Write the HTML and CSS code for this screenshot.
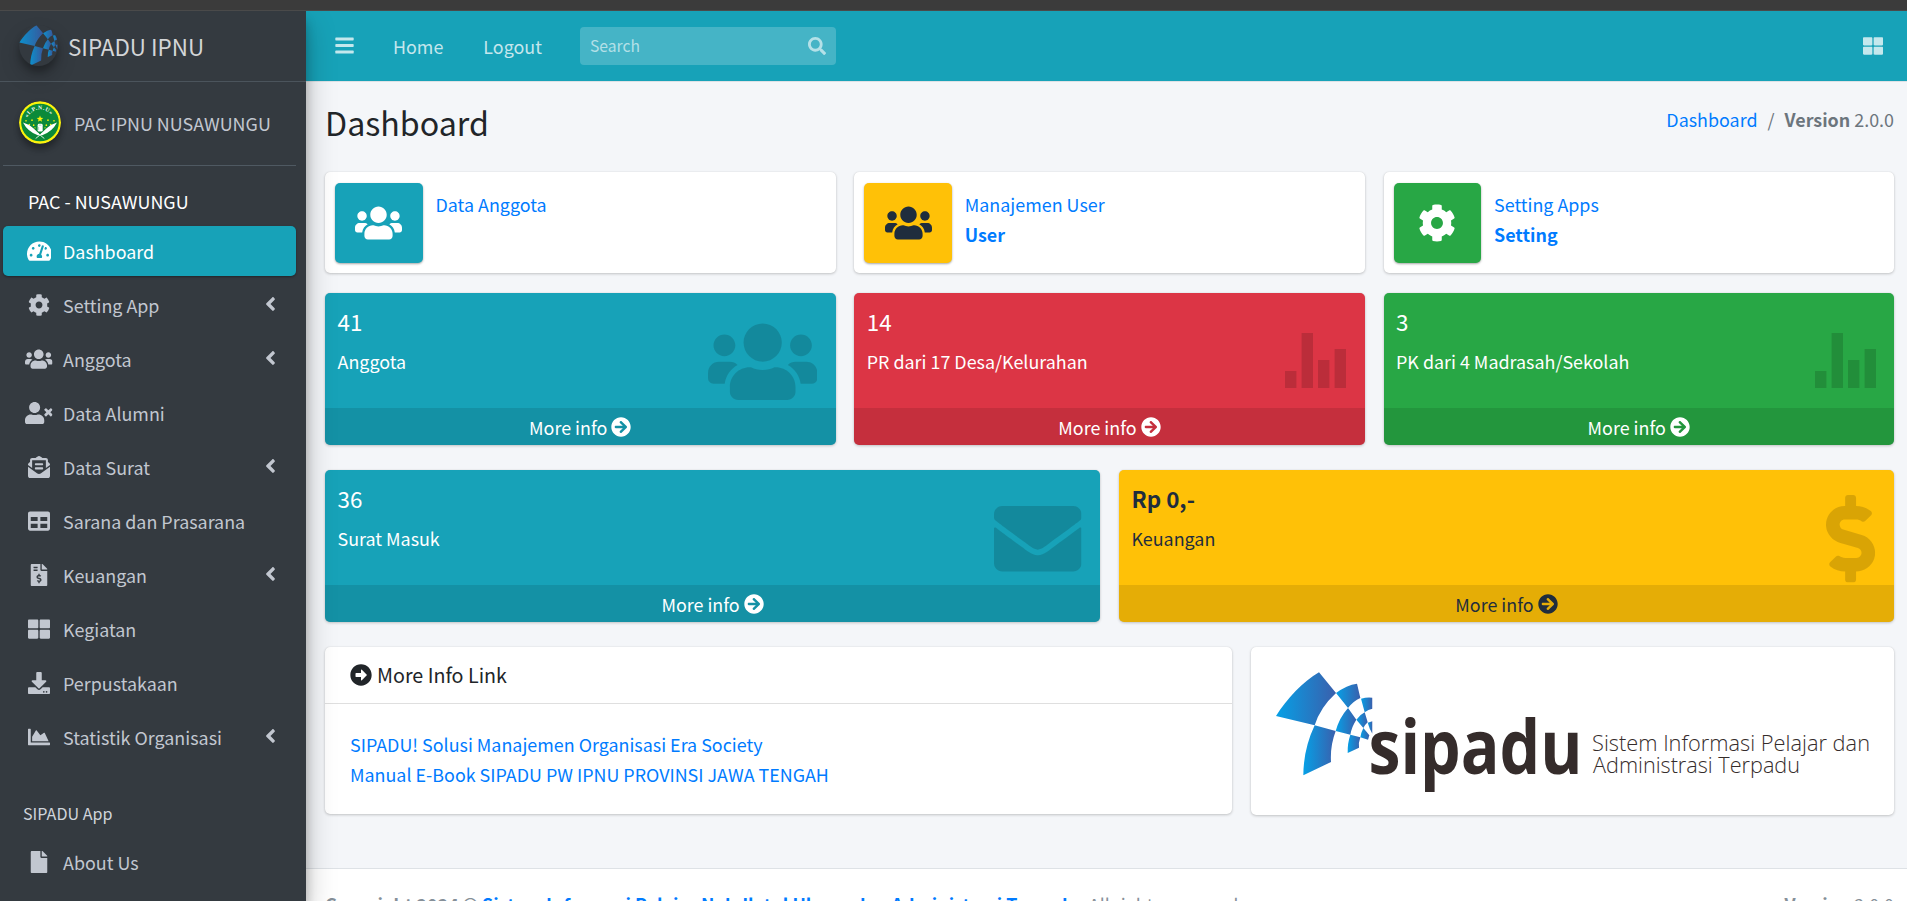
FILE: index.html
```html
<!DOCTYPE html>
<html lang="id">
<head>
<meta charset="utf-8">
<title>SIPADU IPNU | Dashboard</title>
<link rel="stylesheet" href="styles.css">
</head>
<body>
<svg class="sprite" aria-hidden="true">
  <defs>
    <linearGradient id="blue"><stop offset="0" stop-color="#06a0e6"/><stop offset="1" stop-color="#3a5fac"/></linearGradient>
  </defs>
  <symbol id="mark" viewBox="108 98 290 311">
    <g fill="url(#blue)">
      <path d="M108 230C140 180 190 125 237 99L288 161Q240 205 224 258Z"/>
      <path d="M224 258L287 275Q270 320 273 368L190 408Q190 330 224 258Z"/>
      <path d="M288 161Q320 137 351 133L361 176Q340 185 324 206Z"/>
      <path d="M324 206L349 241Q335 262 331 286L287 275Q298 235 324 206Z"/>
      <path d="M331 286L361 294Q355 310 357 325L323 341Q322 312 331 286Z"/>
      <path d="M363 178Q380 173 397 175V208Q385 210 374 219Z"/>
      <path d="M374 219L383 249Q375 256 370 266L349 241Q360 226 374 219Z"/>
      <path d="M383 250L397 246V283Q388 268 383 250Z"/>
      <path d="M370 266L388 288L384 301L361 294Q363 280 370 266Z"/>
    </g>
  </symbol>
  <symbol id="users" viewBox="0 0 640 512"><path d="M96 224c35.3 0 64-28.7 64-64s-28.7-64-64-64-64 28.7-64 64 28.7 64 64 64zm448 0c35.3 0 64-28.7 64-64s-28.7-64-64-64-64 28.7-64 64 28.7 64 64 64zm32 32h-64c-17.6 0-33.5 7.1-45.1 18.6 40.3 22.1 68.9 62 75.1 109.4h66c17.7 0 32-14.3 32-32v-32c0-35.3-28.7-64-64-64zm-256 0c61.9 0 112-50.1 112-112S381.9 32 320 32 208 82.1 208 144s50.1 112 112 112zm76.8 32h-8.3c-20.8 10-43.9 16-68.5 16s-47.6-6-68.5-16h-8.3C179.6 288 128 339.6 128 403.2V432c0 26.5 21.5 48 48 48h288c26.5 0 48-21.5 48-48v-28.8c0-63.6-51.6-115.2-115.2-115.2zm-223.7-13.4C161.5 263.1 145.6 256 128 256H64c-35.3 0-64 28.7-64 64v32c0 17.7 14.3 32 32 32h65.9c6.3-47.4 34.9-87.3 75.2-109.4z"/></symbol>
  <symbol id="cog" viewBox="0 0 512 512"><path d="M487.4 315.7l-42.6-24.6c4.3-23.2 4.3-47 0-70.2l42.6-24.6c4.9-2.8 7.1-8.6 5.5-14-11.1-35.6-30-67.8-54.7-94.6-3.8-4.1-10-5.1-14.8-2.3L380.8 110c-17.9-15.4-38.5-27.3-60.8-35.1V25.8c0-5.6-3.9-10.5-9.4-11.7-36.7-8.2-74.3-7.8-109.2 0-5.5 1.2-9.4 6.1-9.4 11.7V75c-22.2 7.9-42.8 19.8-60.8 35.1L88.7 85.5c-4.9-2.8-11-1.9-14.8 2.3-24.7 26.7-43.6 58.9-54.7 94.6-1.7 5.4.6 11.2 5.5 14L67.3 221c-4.3 23.2-4.3 47 0 70.2l-42.6 24.6c-4.9 2.8-7.1 8.6-5.5 14 11.1 35.6 30 67.8 54.7 94.6 3.8 4.1 10 5.1 14.8 2.3l42.6-24.6c17.9 15.4 38.5 27.3 60.8 35.1v49.2c0 5.6 3.9 10.5 9.4 11.7 36.7 8.2 74.3 7.8 109.2 0 5.5-1.2 9.4-6.1 9.4-11.7v-49.2c22.2-7.9 42.8-19.8 60.8-35.1l42.6 24.6c4.9 2.8 11 1.9 14.8-2.3 24.7-26.7 43.6-58.9 54.7-94.6 1.5-5.5-.7-11.3-5.6-14.1zM256 336c-44.1 0-80-35.9-80-80s35.9-80 80-80 80 35.9 80 80-35.9 80-80 80z"/></symbol>
  <symbol id="gauge" viewBox="0 0 576 512"><path d="M288 32C128.94 32 0 160.94 0 320c0 52.8 14.25 102.26 39.06 144.8 5.61 9.62 16.3 15.2 27.44 15.2h443c11.14 0 21.83-5.58 27.44-15.2C561.75 422.26 576 372.8 576 320c0-159.06-128.94-288-288-288zm0 64c14.71 0 26.58 10.13 30.32 23.65-1.11 2.26-2.64 4.23-3.45 6.67l-9.22 27.67c-5.13 3.49-10.97 6.01-17.64 6.01-17.67 0-32-14.33-32-32S270.33 96 288 96zM96 384c-17.67 0-32-14.33-32-32s14.33-32 32-32 32 14.33 32 32-14.33 32-32 32zm48-160c-17.67 0-32-14.33-32-32s14.33-32 32-32 32 14.33 32 32-14.33 32-32 32zm246.77-72.41l-61.33 184C343.13 347.33 352 364.54 352 384c0 11.72-3.38 22.55-8.88 32H232.88c-5.5-9.45-8.88-20.28-8.88-32 0-33.94 26.5-61.43 59.9-63.59l61.34-184.01c4.17-12.56 17.73-19.45 30.36-15.17 12.57 4.19 19.35 17.79 15.17 30.36zm14.66 57.2l15.52-46.55c3.47-1.29 7.13-2.23 11.05-2.23 17.67 0 32 14.33 32 32s-14.33 32-32 32c-11.38-.01-20.89-6.28-26.57-15.22zM480 384c-17.67 0-32-14.33-32-32s14.33-32 32-32 32 14.33 32 32-14.33 32-32 32z"/></symbol>
  <symbol id="user-times" viewBox="0 0 640 512"><path d="M224 256c70.7 0 128-57.3 128-128S294.7 0 224 0 96 57.3 96 128s57.3 128 128 128zm89.6 32h-16.7c-22.2 10.2-46.9 16-72.9 16s-50.6-5.8-72.9-16h-16.7C60.2 288 0 348.2 0 422.4V464c0 26.5 21.5 48 48 48h352c26.5 0 48-21.5 48-48v-41.6c0-74.2-60.2-134.4-134.4-134.4z"/><path d="M589.6 240l45.6-45.6c6.3-6.3 6.3-16.5 0-22.8l-22.8-22.8c-6.3-6.3-16.5-6.3-22.8 0L544 194.4l-45.6-45.6c-6.3-6.3-16.5-6.3-22.8 0l-22.8 22.8c-6.3 6.3-6.3 16.5 0 22.8l45.6 45.6-45.6 45.6c-6.3 6.3-6.3 16.5 0 22.8l22.8 22.8c6.3 6.3 16.5 6.3 22.8 0l45.6-45.6 45.6 45.6c6.3 6.3 16.5 6.3 22.8 0l22.8-22.8c6.3-6.3 6.3-16.5 0-22.8L589.6 240z"/></symbol>
  <symbol id="mail-open" viewBox="0 0 512 512"><path d="M176 216h160c8.84 0 16-7.16 16-16v-16c0-8.84-7.16-16-16-16H176c-8.84 0-16 7.16-16 16v16c0 8.84 7.16 16 16 16zm-16 80c0 8.84 7.16 16 16 16h160c8.84 0 16-7.16 16-16v-16c0-8.84-7.16-16-16-16H176c-8.84 0-16 7.16-16 16v16zm96 121.13c-16.42 0-32.84-5.06-46.86-15.19L0 250.86V464c0 26.51 21.49 48 48 48h416c26.51 0 48-21.49 48-48V250.86L302.86 401.94c-14.02 10.12-30.44 15.19-46.86 15.19zm237.61-254.18c-8.85-6.94-17.24-13.47-29.61-22.81V96c0-26.51-21.49-48-48-48h-77.55c-3.04-2.2-5.87-4.26-9.04-6.56C312.6 29.17 279.2-.35 256 0c-23.2-.35-56.59 29.17-73.41 41.44-3.17 2.3-6 4.36-9.04 6.56H96c-26.51 0-48 21.49-48 48v44.14c-12.37 9.33-20.76 15.87-29.61 22.81A47.995 47.995 0 0 0 0 200.72v10.65l96 69.35V96h320v184.72l96-69.35v-10.65c0-14.74-6.78-28.67-18.39-37.77z"/></symbol>
  <symbol id="table" viewBox="0 0 512 512"><path d="M464 32H48C21.49 32 0 53.49 0 80v352c0 26.51 21.49 48 48 48h416c26.51 0 48-21.49 48-48V80c0-26.51-21.49-48-48-48zM224 416H64v-96h160v96zm0-160H64v-96h160v96zm224 160H288v-96h160v96zm0-160H288v-96h160v96z"/></symbol>
  <symbol id="invoice" viewBox="0 0 384 512"><path fill-rule="evenodd" d="M377 105L279.1 7c-4.5-4.5-10.6-7-17-7H256v128h128v-6.1c0-6.3-2.5-12.4-7-16.9zM224 136V0H24C10.7 0 0 10.7 0 24v464c0 13.3 10.7 24 24 24h336c13.3 0 24-10.7 24-24V160H248c-13.2 0-24-10.8-24-24zM64 72c0-4.42 3.58-8 8-8h80c4.42 0 8 3.58 8 8v16c0 4.42-3.58 8-8 8H72c-4.42 0-8-3.58-8-8V72zm0 80v-16c0-4.42 3.58-8 8-8h80c4.42 0 8 3.58 8 8v16c0 4.42-3.58 8-8 8H72c-4.42 0-8-3.58-8-8zm144 263.88V440c0 4.42-3.58 8-8 8h-16c-4.42 0-8-3.58-8-8v-24.29c-11.29-.58-22.27-4.52-31.37-11.35-3.9-2.93-4.1-8.77-.57-12.14l11.75-11.21c2.77-2.64 6.89-2.76 10.13-.73 3.87 2.42 8.26 3.72 12.82 3.72h28.11c6.5 0 11.8-5.92 11.8-13.19 0-5.95-3.61-11.19-8.77-12.73l-45-13.5c-18.59-5.58-31.58-23.42-31.58-43.39 0-24.52 19.05-44.44 42.67-45.07V232c0-4.42 3.58-8 8-8h16c4.42 0 8 3.58 8 8v24.29c11.29.58 22.27 4.51 31.37 11.35 3.9 2.93 4.1 8.77.57 12.14l-11.75 11.21c-2.77 2.64-6.89 2.76-10.13.73-3.87-2.43-8.26-3.72-12.82-3.72h-28.11c-6.5 0-11.8 5.92-11.8 13.19 0 5.95 3.61 11.19 8.77 12.73l45 13.5c18.59 5.58 31.58 23.42 31.58 43.39 0 24.53-19.05 44.44-42.67 45.07z"/></symbol>
  <symbol id="grid" viewBox="0 0 512 512"><path d="M296 32h192c13.255 0 24 10.745 24 24v160c0 13.255-10.745 24-24 24H296c-13.255 0-24-10.745-24-24V56c0-13.255 10.745-24 24-24zm-80 0H24C10.745 32 0 42.745 0 56v160c0 13.255 10.745 24 24 24h192c13.255 0 24-10.745 24-24V56c0-13.255-10.745-24-24-24zM0 296v160c0 13.255 10.745 24 24 24h192c13.255 0 24-10.745 24-24V296c0-13.255-10.745-24-24-24H24c-13.255 0-24 10.745-24 24zm296 184h192c13.255 0 24-10.745 24-24V296c0-13.255-10.745-24-24-24H296c-13.255 0-24 10.745-24 24v160c0 13.255 10.745 24 24 24z"/></symbol>
  <symbol id="download" viewBox="0 0 512 512"><path d="M216 0h80c13.3 0 24 10.7 24 24v168h87.7c17.8 0 26.7 21.5 14.1 34.1L269.7 378.3c-7.5 7.5-19.8 7.5-27.3 0L90.1 226.1c-12.6-12.6-3.7-34.1 14.1-34.1H192V24c0-13.3 10.7-24 24-24zm296 376v112c0 13.3-10.7 24-24 24H24c-13.3 0-24-10.7-24-24V376c0-13.3 10.7-24 24-24h146.7l49 49c20.1 20.1 52.5 20.1 72.6 0l49-49H488c13.3 0 24 10.7 24 24zm-124 88c0-11-9-20-20-20s-20 9-20 20 9 20 20 20 20-9 20-20zm64 0c0-11-9-20-20-20s-20 9-20 20 9 20 20 20 20-9 20-20z"/></symbol>
  <symbol id="chart-area" viewBox="0 0 512 512"><path d="M500 384c6.6 0 12 5.4 12 12v40c0 6.6-5.4 12-12 12H12c-6.6 0-12-5.4-12-12V76c0-6.6 5.4-12 12-12h40c6.6 0 12 5.4 12 12v308h436zM372.7 159.5L288 216l-85.3-113.7c-5.1-6.8-15.5-6.3-19.9 1L96 248v104h384l-89.9-187.8c-3.2-6.5-11.4-8.7-17.4-4.7z"/></symbol>
  <symbol id="file" viewBox="0 0 384 512"><path d="M224 136V0H24C10.7 0 0 10.7 0 24v464c0 13.3 10.7 24 24 24h336c13.3 0 24-10.7 24-24V160H248c-13.2 0-24-10.8-24-24zm160-14.1v6.1H256V0h6.1c6.4 0 12.5 2.5 17 7l97.9 98c4.5 4.5 7 10.6 7 16.9z"/></symbol>
  <symbol id="angle" viewBox="0 0 256 512"><path d="M31.7 239l136-136c9.4-9.4 24.6-9.4 33.9 0l22.6 22.6c9.4 9.4 9.4 24.6 0 33.9L127.9 256l96.4 96.4c9.4 9.4 9.4 24.6 0 33.9L201.7 409c-9.4 9.4-24.6 9.4-33.9 0l-136-136c-9.5-9.4-9.5-24.6-.1-34z"/></symbol>
  <symbol id="bars" viewBox="0 0 448 512"><rect y="60" width="448" height="72" rx="16"/><rect y="220" width="448" height="72" rx="16"/><rect y="380" width="448" height="72" rx="16"/></symbol>
  <symbol id="search" viewBox="0 0 512 512"><path d="M505 442.7L405.3 343c-4.5-4.5-10.6-7-17-7H372c27.6-35.3 44-79.7 44-128C416 93.1 322.9 0 208 0S0 93.1 0 208s93.1 208 208 208c48.3 0 92.7-16.4 128-44v16.3c0 6.4 2.5 12.5 7 17l99.7 99.7c9.4 9.4 24.6 9.4 33.9 0l28.3-28.3c9.4-9.4 9.4-24.6.1-34zM208 336c-70.7 0-128-57.2-128-128 0-70.7 57.2-128 128-128 70.7 0 128 57.2 128 128 0 70.7-57.2 128-128 128z"/></symbol>
  <symbol id="envelope" viewBox="0 0 512 512"><path d="M502.3 190.8c3.9-3.1 9.7-.2 9.7 4.7V400c0 26.5-21.5 48-48 48H48c-26.5 0-48-21.5-48-48V195.6c0-5 5.7-7.8 9.7-4.7 22.4 17.4 52.1 39.5 154.1 113.6 21.1 15.4 56.7 47.8 92.2 47.6 35.7.3 72-32.8 92.3-47.6 102-74.1 131.6-96.3 154-113.7zM256 320c23.2.4 56.6-29.2 73.4-41.4 132.7-96.3 142.8-104.7 173.4-128.7 5.8-4.5 9.2-11.5 9.2-18.9v-19c0-26.5-21.5-48-48-48H48c-26.5 0-48 21.5-48 48v19c0 7.4 3.4 14.3 9.2 18.9 30.6 23.9 40.7 32.4 173.4 128.7 16.8 12.2 50.2 41.8 73.4 41.4z"/></symbol>
  <symbol id="dollar" viewBox="0 0 288 512"><path d="M209.2 233.4l-108-31.6C88.7 198.2 80 186.5 80 173.5c0-16.3 13.2-29.5 29.5-29.5h66.3c12.2 0 24.2 3.7 34.2 10.5 6.1 4.1 14.3 3.1 19.5-2l34.8-34c7.1-6.9 6.1-18.4-1.8-24.5C238 74.8 207.4 64.1 176 64V16c0-8.8-7.2-16-16-16h-32c-8.8 0-16 7.2-16 16v48h-2.5C45.8 64-5.4 118.7.5 183.6c4.2 46.1 39.4 83.6 83.8 96.6l102.5 30c12.5 3.7 21.2 15.3 21.2 28.3 0 16.3-13.2 29.5-29.5 29.5h-66.3C100 368 88 364.3 78 357.5c-6.1-4.1-14.3-3.1-19.5 2l-34.8 34c-7.1 6.9-6.1 18.4 1.8 24.5 24.5 19.2 55.1 29.9 86.5 30v48c0 8.8 7.2 16 16 16h32c8.8 0 16-7.2 16-16v-48.2c46.6-.9 90.3-28.6 105.7-72.7 21.5-61.6-14.6-124.8-72.5-141.7z"/></symbol>
  <symbol id="stats" viewBox="0 0 61 55"><path d="M0 38h11.4v17H0zM16.6 0H28v55H16.6zM33 27h11.4v28H33zM49.6 16H61v39H49.6z"/></symbol>
  <symbol id="go" viewBox="0 0 512 512"><path d="M256 8c137 0 248 111 248 248S393 504 256 504 8 393 8 256 119 8 256 8zm-28.9 143.6l75.5 72.4H120c-13.3 0-24 10.7-24 24v16c0 13.3 10.7 24 24 24h182.6l-75.5 72.4c-9.7 9.3-9.9 24.8-.4 34.3l11 10.9c9.4 9.4 24.6 9.4 33.9 0L404.3 273c9.4-9.4 9.4-24.6 0-33.9L271.6 106.3c-9.4-9.4-24.6-9.4-33.9 0l-11 10.9c-9.5 9.6-9.3 25.1.4 34.4z"/></symbol>
  <symbol id="go-alt" viewBox="0 0 512 512"><path d="M256 8c137 0 248 111 248 248S393 504 256 504 8 393 8 256 119 8 256 8zM140 300h116v70.9c0 10.7 13 16.1 20.5 8.5l114.3-114.9c4.7-4.7 4.7-12.2 0-16.9l-114.3-115c-7.6-7.6-20.5-2.2-20.5 8.5V212H140c-6.6 0-12 5.4-12 12v64c0 6.6 5.4 12 12 12z"/></symbol>
</svg>

<div class="chrome"></div>
<div class="app">
  <aside class="sidebar">
    <a class="brand"><span class="brand-logo"><svg><use href="#mark"/></svg></span>SIPADU IPNU</a>
    <div class="user">
      <svg class="avatar" viewBox="0 0 126 128">
        <ellipse cx="63" cy="64" rx="63" ry="64" fill="#fbf30c"/>
        <circle cx="63" cy="64" r="56.5" fill="#0b8a3a"/>
        <path id="arc" d="M26 50A40 40 0 0 1 100 50" fill="none"/>
        <text class="avatar-text"><textPath href="#arc" textLength="84">«I.P.N.U»</textPath></text>
        <path fill="#fbf30c" d="M63 43l2.6 7 7.4.2-5.900 4.600 2.100 7.200-6.200-4.200-6.200 4.200 2.100-7.200-5.900-4.600 7.400-.2z"/>
        <g fill="#fbf30c"><circle cx="39" cy="57" r="2.500"/><circle cx="87" cy="57" r="2.500"/><circle cx="21" cy="59" r="2.500"/><circle cx="105" cy="59" r="2.500"/><circle cx="31" cy="70" r="2.500"/><circle cx="95" cy="70" r="2.500"/><circle cx="44" cy="72" r="2.500"/><circle cx="82" cy="72" r="2.500"/><circle cx="48" cy="80" r="2"/><circle cx="78" cy="80" r="2"/></g>
        <path fill="#fff" d="M12 64Q28 68 44 82L62 99 58 103Q26 92 12 64zM114 64Q98 68 82 82L64 99 68 103Q100 92 114 64z"/>
        <path stroke="#fff" stroke-width="2.500" fill="none" d="M50 112L70 96M76 112L56 96"/>
        <rect x="56" y="68" width="15" height="23" rx="4" fill="#fff"/><path d="M59 72h8M59 77v10" stroke="#0b8a3a"/>
      </svg>
      <span>PAC IPNU NUSAWUNGU</span>
    </div>
    <nav class="menu">
      <div class="menu-title">PAC - NUSAWUNGU</div>
      <a class="item active"><span class="ico"><svg class="w576"><use href="#gauge"/></svg></span>Dashboard</a>
      <a class="item"><span class="ico"><svg><use href="#cog"/></svg></span>Setting App<svg class="angle"><use href="#angle"/></svg></a>
      <a class="item"><span class="ico"><svg class="w640"><use href="#users"/></svg></span>Anggota<svg class="angle"><use href="#angle"/></svg></a>
      <a class="item"><span class="ico"><svg class="w640"><use href="#user-times"/></svg></span>Data Alumni</a>
      <a class="item"><span class="ico"><svg><use href="#mail-open"/></svg></span>Data Surat<svg class="angle"><use href="#angle"/></svg></a>
      <a class="item"><span class="ico"><svg><use href="#table"/></svg></span>Sarana dan Prasarana</a>
      <a class="item"><span class="ico"><svg><use href="#invoice"/></svg></span>Keuangan<svg class="angle"><use href="#angle"/></svg></a>
      <a class="item"><span class="ico"><svg><use href="#grid"/></svg></span>Kegiatan</a>
      <a class="item"><span class="ico"><svg><use href="#download"/></svg></span>Perpustakaan</a>
      <a class="item"><span class="ico"><svg><use href="#chart-area"/></svg></span>Statistik Organisasi<svg class="angle"><use href="#angle"/></svg></a>
      <div class="menu-header">SIPADU App</div>
      <a class="item"><span class="ico"><svg><use href="#file"/></svg></span>About Us</a>
    </nav>
  </aside>

  <div class="page">
    <header class="topbar">
      <svg class="burger"><use href="#bars"/></svg>
      <a class="top-link">Home</a>
      <a class="top-link">Logout</a>
      <div class="search"><span>Search</span><svg><use href="#search"/></svg></div>
      <svg class="apps"><use href="#grid"/></svg>
    </header>

    <main class="content">
      <div class="heading">
        <h1>Dashboard</h1>
        <div class="crumbs"><a>Dashboard</a><i>/</i><span><b>Version</b> 2.0.0</span></div>
      </div>

      <section class="row three info-row">
        <div class="info"><span class="info-icon teal"><svg class="w640"><use href="#users"/></svg></span><div class="info-text"><a>Data Anggota</a></div></div>
        <div class="info"><span class="info-icon yellow"><svg class="w640"><use href="#users"/></svg></span><div class="info-text"><a>Manajemen User</a><a><b>User</b></a></div></div>
        <div class="info"><span class="info-icon green"><svg><use href="#cog"/></svg></span><div class="info-text"><a>Setting Apps</a><a><b>Setting</b></a></div></div>
      </section>

      <section class="row three">
        <div class="box teal"><div class="inner"><h3>41</h3><p>Anggota</p></div><svg class="big users"><use href="#users"/></svg><a class="more">More info <svg><use href="#go"/></svg></a></div>
        <div class="box red"><div class="inner"><h3>14</h3><p>PR dari 17 Desa/Kelurahan</p></div><svg class="big stats"><use href="#stats"/></svg><a class="more">More info <svg><use href="#go"/></svg></a></div>
        <div class="box green"><div class="inner"><h3>3</h3><p>PK dari 4 Madrasah/Sekolah</p></div><svg class="big stats"><use href="#stats"/></svg><a class="more">More info <svg><use href="#go"/></svg></a></div>
      </section>

      <section class="row two">
        <div class="box teal"><div class="inner"><h3>36</h3><p>Surat Masuk</p></div><svg class="big envelope"><use href="#envelope"/></svg><a class="more">More info <svg><use href="#go"/></svg></a></div>
        <div class="box yellow"><div class="inner"><h3><b>Rp 0,-</b></h3><p>Keuangan</p></div><svg class="big dollar"><use href="#dollar"/></svg><a class="more">More info <svg><use href="#go"/></svg></a></div>
      </section>

      <section class="row wide">
        <div class="card">
          <div class="card-head"><svg><use href="#go-alt"/></svg>More Info Link</div>
          <div class="card-body"><a>SIPADU! Solusi Manajemen Organisasi Era Society</a><a>Manual E-Book SIPADU PW IPNU PROVINSI JAWA TENGAH</a></div>
        </div>
        <div class="card logo-card">
          <svg class="logo" viewBox="0 0 595 120">
            <use href="#mark" x="0" y="0" width="96.700" height="103.700"/>
            <text class="logo-word" x="92.500" y="102.300" textLength="214" lengthAdjust="spacingAndGlyphs">sipadu</text>
            <text class="logo-sub" x="316" y="79" textLength="278" lengthAdjust="spacingAndGlyphs">Sistem Informasi Pelajar dan</text>
            <text class="logo-sub" x="317" y="101.300" textLength="207" lengthAdjust="spacingAndGlyphs">Administrasi Terpadu</text>
          </svg>
        </div>
      </section>
    </main>

    <footer class="footer">
      <div><b>Copyright 2024 © <a>Sistem Informasi Pelajar Nahdlatul Ulama dan Administrasi Terpadu</a>.</b> All rights reserved.</div>
      <div><b>Version</b> 2.0.0</div>
    </footer>
  </div>
</div>
</body>
</html>
```
FILE: styles.css
```css
* { box-sizing: border-box; }
html, body { height: 100%; margin: 0; overflow: hidden; }
body {
  display: flex;
  flex-direction: column;
  font: 17.9px/30px "Noto Sans CJK SC", "Open Sans", sans-serif;
  color: #212529;
  background: #f4f6f9;
}
h1, h3, p { margin: 0; font-weight: 400; }
svg { fill: currentColor; display: block; flex: none; }
a { color: #007bff; text-decoration: none; }
.sprite { position: absolute; width: 0; height: 0; }

.chrome { height: 11px; flex: none; background: #3b3b3b; border-bottom: 1px solid #4a4a4a; }
.app { flex: 1; min-height: 0; display: flex; }

/* sidebar */
.sidebar {
  width: 306px;
  flex: none;
  background: #343a40;
  color: #c2c7d0;
  position: relative;
  z-index: 2;
  box-shadow: 0 14px 28px rgba(0,0,0,.25), 0 10px 10px rgba(0,0,0,.22);
  clip-path: inset(0 -60px 0 0);
}
.sidebar a { color: inherit; }
.sidebar .brand {
  display: flex;
  align-items: center;
  height: 71px;
  padding: 0 0 1px 19px;
  border-bottom: 1px solid #4b545c;
  font-size: 22.4px;
  color: #d3d5d7;
  gap: 10px;
}
.brand-logo {
  width: 39px; height: 41px;
  border-radius: 50%;
  overflow: hidden;
  box-shadow: 0 10px 20px rgba(0,0,0,.19), 0 6px 6px rgba(0,0,0,.23);
}
.brand-logo svg { width: 39px; height: 41px; opacity: .85; }
.user {
  display: flex;
  align-items: center;
  gap: 13px;
  height: 84px;
  margin: 0 10px 0 3px;
  padding: 0 0 2px 16px;
  border-bottom: 1px solid #4f5962;
}
.avatar { width: 42px; height: 43px; border-radius: 50%; box-shadow: 0 3px 6px rgba(0,0,0,.16), 0 6px 6px rgba(0,0,0,.23); }
.avatar-text { font: bold 17px "Liberation Serif", serif; fill: #fff; }
.menu { margin: 0 10px 0 3px; display: flex; flex-direction: column; gap: 4px; }
.menu-title { height: 56px; padding: 20px 0 0 25px; color: #fff; }
.menu-header { height: 67px; padding: 29px 0 0 20px; font-size: 16.1px; line-height: 36px; color: #d0d4db; }
.item { display: flex; align-items: center; height: 50px; padding: 0 20px 0 20px; border-radius: 5px; }
.sidebar .item.active { background: #17a2b8; color: #fff; box-shadow: 0 1px 3px rgba(0,0,0,.12), 0 1px 2px rgba(0,0,0,.24); }
.ico { width: 32px; margin-right: 8px; display: flex; justify-content: center; }
.ico svg { width: 22px; height: 22px; }
.ico .w576 { width: 24.75px; }
.ico .w640 { width: 27.5px; }
.angle { width: 11px; height: 22px; margin: 0 0 2px auto; }

/* top bar */
.page { flex: 1; min-width: 0; display: flex; flex-direction: column; }
.topbar {
  height: 71px;
  flex: none;
  display: flex;
  align-items: center;
  padding: 0 24px 1px 29px;
  background: #17a2b8;
  border-bottom: 1px solid #dee2e6;
  color: rgba(255,255,255,.75);
}
.burger { width: 19px; height: 21px; margin-right: 39px; }
.top-link { color: inherit; margin-right: 40px; }
.search {
  width: 256px; height: 38px;
  margin-left: -2px;
  display: flex;
  align-items: center;
  justify-content: space-between;
  padding: 0 10px;
  border-radius: 4px;
  background: rgba(255,255,255,.2);
  font-size: 15.7px;
  color: rgba(255,255,255,.6);
}
.search svg { width: 18px; height: 18px; }
.apps { width: 20px; height: 20px; margin-left: auto; }

/* content */
.content { height: 786px; flex: none; padding: 0 13px 0 19px; }
.heading { display: flex; justify-content: space-between; height: 90px; padding-top: 19px; }
.heading h1 { font-size: 32.2px; line-height: 43px; }
.crumbs { display: flex; gap: 10px; padding-top: 3px; color: #6c757d; }
.crumbs i { font-style: normal; }
.row { display: grid; column-gap: 18.75px; }
.three { grid-template-columns: repeat(3, 1fr); margin-bottom: 25px; }
.two { grid-template-columns: 1fr 1fr; margin-bottom: 25px; }
.wide { grid-template-columns: 907.4px 1fr; }
.info-row { margin-bottom: 20px; }
.info, .box, .card { border-radius: 5px; box-shadow: 0 0 1px rgba(0,0,0,.13), 0 1px 3px rgba(0,0,0,.2); }
.info { display: flex; height: 101px; padding: 11px 10px 10px; background: #fff; }
.info-icon { width: 87.5px; border-radius: 5px; display: flex; align-items: center; justify-content: center; box-shadow: 0 1px 3px rgba(0,0,0,.12), 0 1px 2px rgba(0,0,0,.24); }
.info-icon svg { width: 38px; height: 38px; }
.info-icon .w640 { width: 47px; }
.info-text { display: flex; flex-direction: column; padding: 6px 13px; }
.teal { background: #17a2b8; color: #fff; }
.red { background: #dc3545; color: #fff; }
.green { background: #28a745; color: #fff; }
.yellow { background: #ffc107; color: #1f2d3d; }
.box { position: relative; height: 152px; display: flex; flex-direction: column; overflow: hidden; }
.box h3 { font-size: 22.4px; line-height: 30px; }
.inner { flex: 1; padding: 12.5px; }
.inner p { margin-top: 10px; }
.box .more { display: flex; align-items: center; justify-content: center; gap: 4px; height: 37px; background: rgba(0,0,0,.1); color: inherit; }
.more svg { width: 20px; height: 20px; }
.big { position: absolute; right: 18.5px; top: 25px; height: 87.5px; color: rgba(0,0,0,.15); }
.big.users { width: 109.4px; }
.big.envelope { width: 87.5px; }
.big.dollar { width: 49.2px; }
.big.stats { width: 61px; height: 55px; top: 40px; }
.card { height: 167px; background: #fff; }
.card-head { display: flex; align-items: center; gap: 5px; height: 57px; padding: 0 25px 1px; border-bottom: 1px solid #dfdfdf; font-size: 19.7px; }
.card-head svg { width: 22px; height: 22px; }
.card-body { display: flex; flex-direction: column; padding: 25px; }
.logo-card { padding: 25px 0 0 25px; height: 168px; }
.logo { width: 595px; height: 120px; }
.logo-word { font: 700 75px "Open Sans", sans-serif; fill: #352c2b; }
.logo-sub { font: 300 22px "Open Sans", sans-serif; fill: #352c2b; }

.footer { flex: none; display: flex; justify-content: space-between; padding: 20px 13px 20px 19px; background: #fff; border-top: 1px solid #dee2e6; color: #869099; }
```
